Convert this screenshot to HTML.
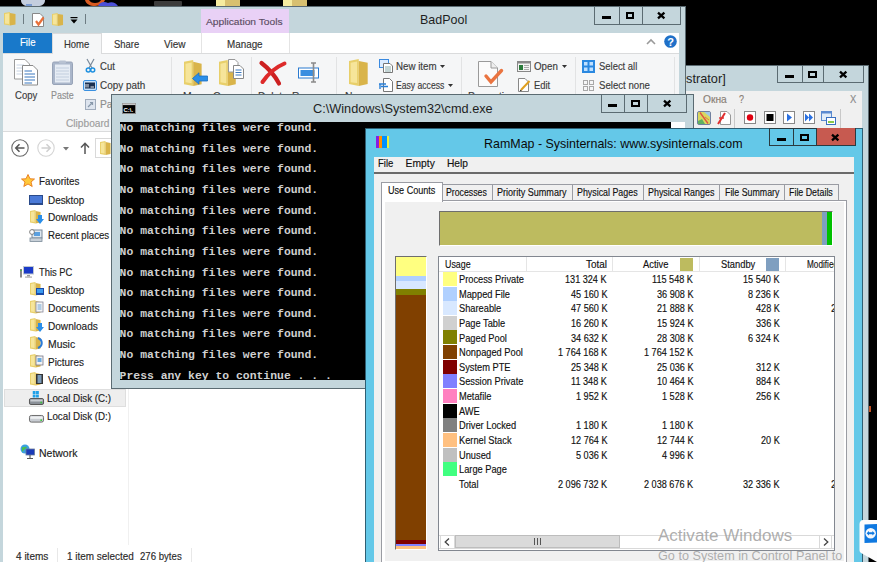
<!DOCTYPE html>
<html><head><meta charset="utf-8">
<style>

*{margin:0;padding:0;box-sizing:border-box}
html,body{width:877px;height:562px;overflow:hidden;background:#000;position:relative}
.a{position:absolute}
.t{position:absolute;white-space:pre;line-height:1}
svg{position:absolute;overflow:visible}

</style></head><body>
<svg style="left:0;top:0" width="330" height="6"><path d="M21 0 H45 C45 4 42 6 38 6 H28 C24 6 21 4 21 0Z" fill="#c4cede"/><path d="M26 6 H32 V4 H26Z" fill="#7a9ad0"/><path d="M85 0 C86 4 90 6 95 6 C100 6 104 3 105 0 H101 C100 2 98 3 95 3 C92 3 90 2 89 0Z" fill="#d85a20"/><path d="M98 6 C100 2 104 1 108 3 C112 1 116 3 118 6Z" fill="#4a50d8"/><rect x="154" y="1" width="28" height="5" rx="1" fill="#3c3c3c"/><rect x="216" y="0" width="9" height="6" fill="#f6eca0"/><rect x="225" y="0" width="15" height="6" fill="#d8c070"/><rect x="283" y="0" width="9" height="6" fill="#f6eca0"/><rect x="292" y="0" width="15" height="6" fill="#d8c070"/></svg>
<div class="a" style="left:0px;top:6px;width:686px;height:556px;background:#c4d6dc;border-top:1px solid #5b6b72;border-right:1px solid #5b6b72"></div>
<div class="a" style="left:594px;top:6px;width:87px;height:19px;background:#c4d6dc;border:1px solid #5b6b72"></div>
<div class="a" style="left:618.5px;top:6px;width:1px;height:19px;background:#5b6b72;"></div>
<div class="a" style="left:641.5px;top:6px;width:1px;height:19px;background:#5b6b72;"></div>
<div class="a" style="left:601.75px;top:16px;width:9px;height:2.8px;background:#000;"></div>
<div class="a" style="left:625.7px;top:12.2px;width:8.8px;height:6.6px;border:2px solid #000;border-top-width:2.3px"></div>
<svg style="left:657.05px;top:12px" width="8.4" height="7" viewBox="0 0 8.4 7"><path d="M1 0.6 L7.4 6.4 M7.4 0.6 L1 6.4" stroke="#000" stroke-width="2.3" stroke-linecap="butt"/></svg>
<svg style="left:4px;top:12px" width="12" height="13.5" viewBox="0 0 12 14" preserveAspectRatio="none"><path d="M0 1 L6 0 L6 14 L0 13Z" fill="#e8cf6a"/><path d="M6 1 L11.5 2 L11.5 13 L6 14Z" fill="#d9b44a"/><path d="M1 2 L5 1.3 L5 12.5 L1 12Z" fill="#f6e59a"/></svg>
<div class="a" style="left:23px;top:14px;width:1px;height:10px;background:#6d7c82;"></div>
<svg style="left:32px;top:13px" width="13" height="14" viewBox="0 0 13 14"><path d="M0.5 0.5 H8 L11.5 4 V13.5 H0.5Z" fill="#fff" stroke="#888"/><path d="M4 8 L6.5 11.5 L11.5 4.5" stroke="#e8703a" stroke-width="2.2" fill="none"/></svg>
<svg style="left:51.5px;top:13px" width="11.5" height="13" viewBox="0 0 12 14" preserveAspectRatio="none"><path d="M0 1 L6 0 L6 14 L0 13Z" fill="#e8cf6a"/><path d="M6 1 L11.5 2 L11.5 13 L6 14Z" fill="#d9b44a"/><path d="M1 2 L5 1.3 L5 12.5 L1 12Z" fill="#f6e59a"/></svg>
<svg style="left:70px;top:17px" width="8" height="7"><rect x="0.5" y="0" width="7" height="1.2" fill="#000"/><path d="M0.5 2.5 H7.5 L4 6.5Z" fill="#000"/></svg>
<div class="a" style="left:85px;top:14px;width:1px;height:10px;background:#6d7c82;"></div>
<div class="a" style="left:200.5px;top:9.4px;width:88.6px;height:23.6px;background:#e9d1f6;"></div>
<span class="t" style="-webkit-text-stroke:0.15px #5b4d63;left:206.40px;top:17.00px;font-size:9.9px;color:#5b4d63;font-family:'Liberation Sans',sans-serif;font-weight:400;transform:scaleX(1.0360);transform-origin:0 0;">Application Tools</span>
<span class="t" style="left:419.90px;top:13.00px;font-size:13.6px;color:#1e1e1e;font-family:'Liberation Sans',sans-serif;font-weight:400;transform:scaleX(0.9182);transform-origin:0 0;">BadPool</span>
<div class="a" style="left:3px;top:33px;width:676px;height:20px;background:#ffffff;"></div>
<div class="a" style="left:3px;top:33px;width:48.5px;height:19.6px;background:#1979ca;"></div>
<span class="t" style="-webkit-text-stroke:0.15px #ffffff;left:19.70px;top:38.00px;font-size:10.2px;color:#ffffff;font-family:'Liberation Sans',sans-serif;font-weight:400;transform:scaleX(0.9439);transform-origin:0 0;">File</span>
<span class="t" style="-webkit-text-stroke:0.15px #333;left:113.50px;top:40.00px;font-size:10.3px;color:#333;font-family:'Liberation Sans',sans-serif;font-weight:400;transform:scaleX(0.9169);transform-origin:0 0;">Share</span>
<span class="t" style="-webkit-text-stroke:0.15px #333;left:164.00px;top:40.00px;font-size:10.3px;color:#333;font-family:'Liberation Sans',sans-serif;font-weight:400;transform:scaleX(0.9756);transform-origin:0 0;">View</span>
<div class="a" style="left:201px;top:33px;width:1px;height:20px;background:#e4e4e4;"></div>
<div class="a" style="left:288.5px;top:33px;width:1px;height:20px;background:#e4e4e4;"></div>
<span class="t" style="-webkit-text-stroke:0.15px #333;left:226.70px;top:40.00px;font-size:10.3px;color:#333;font-family:'Liberation Sans',sans-serif;font-weight:400;transform:scaleX(0.9565);transform-origin:0 0;">Manage</span>
<svg style="left:646px;top:38px" width="10" height="7"><path d="M1 6 L5 2 L9 6" stroke="#9a9a9a" stroke-width="1.6" fill="none"/></svg>
<svg style="left:663.5px;top:35.3px" width="13" height="13"><circle cx="6.5" cy="6.5" r="6.3" fill="#1f70c8"/><text x="6.5" y="10.6" font-family="Liberation Sans" font-weight="bold" font-size="11" fill="#fff" text-anchor="middle">?</text></svg>
<div class="a" style="left:3px;top:53px;width:676px;height:79px;background:#f5f6f7;border-top:1px solid #dadbdc;border-bottom:1px solid #dadbdc"></div>
<div class="a" style="left:52px;top:33px;width:49.5px;height:21px;background:#f5f6f7;border:1px solid #dadbdc;border-bottom:none"></div>
<span class="t" style="-webkit-text-stroke:0.15px #333;left:63.70px;top:40.00px;font-size:10.3px;color:#333;font-family:'Liberation Sans',sans-serif;font-weight:400;transform:scaleX(0.9210);transform-origin:0 0;">Home</span>
<div class="a" style="left:171px;top:57px;width:1px;height:72px;background:#e2e3e4;"></div>
<div class="a" style="left:251.4px;top:57px;width:1px;height:72px;background:#e2e3e4;"></div>
<div class="a" style="left:336.3px;top:57px;width:1px;height:72px;background:#e2e3e4;"></div>
<div class="a" style="left:461px;top:57px;width:1px;height:72px;background:#e2e3e4;"></div>
<div class="a" style="left:575.4px;top:57px;width:1px;height:72px;background:#e2e3e4;"></div>
<div class="a" style="left:674.4px;top:57px;width:1px;height:72px;background:#e2e3e4;"></div>
<svg style="left:14px;top:59px" width="25" height="27" viewBox="0 0 25 27"><path d="M0.5 0.5 H11 L15.5 5 V20 H0.5Z" fill="#fff" stroke="#9a9a9a"/><path d="M2.5 6 H10 M2.5 9 H12 M2.5 12 H12 M2.5 15 H12" stroke="#c8d4e4"/><path d="M8.5 6.5 H19 L23.5 11 V26 H8.5Z" fill="#fff" stroke="#8a8a8a"/><path d="M10.5 12 H18 M10.5 15 H21 M10.5 18 H21 M10.5 21 H21 M10.5 24 H18" stroke="#3a78c0" stroke-width="1.2"/></svg>
<span class="t" style="-webkit-text-stroke:0.15px #3b3b3b;left:14.70px;top:91.00px;font-size:10.4px;color:#3b3b3b;font-family:'Liberation Sans',sans-serif;font-weight:400;transform:scaleX(0.9190);transform-origin:0 0;">Copy</span>
<svg style="left:52px;top:60px" width="21" height="25" viewBox="0 0 21 25"><rect x="0.5" y="2" width="20" height="22.5" rx="1.5" fill="#aab6ca" stroke="#98a4b8"/><rect x="3" y="4.5" width="15" height="18" fill="#e6ecf4"/><path d="M4 8 H17 M4 11 H17 M4 14 H17 M4 17 H17 M4 20 H17" stroke="#c2cede"/><rect x="7" y="0.5" width="7" height="3" rx="1" fill="#b8c2d2"/></svg>
<span class="t" style="-webkit-text-stroke:0.15px #8e8e8e;left:50.80px;top:91.00px;font-size:10.4px;color:#8e8e8e;font-family:'Liberation Sans',sans-serif;font-weight:400;transform:scaleX(0.8578);transform-origin:0 0;">Paste</span>
<svg style="left:85.5px;top:59px" width="9" height="14" viewBox="0 0 9 14"><path d="M1 0 L6 9 M8 0 L3 9" stroke="#7a8a9a" stroke-width="1.2"/><circle cx="2.3" cy="11" r="2" fill="none" stroke="#1e90e0" stroke-width="1.5"/><circle cx="6.7" cy="11" r="2" fill="none" stroke="#1e90e0" stroke-width="1.5"/></svg>
<span class="t" style="-webkit-text-stroke:0.15px #3b3b3b;left:100.00px;top:62.00px;font-size:10.3px;color:#3b3b3b;font-family:'Liberation Sans',sans-serif;font-weight:400;transform:scaleX(0.9294);transform-origin:0 0;">Cut</span>
<svg style="left:83px;top:80px" width="14" height="11" viewBox="0 0 14 11"><rect x="0.5" y="0.5" width="13" height="10" rx="1.5" fill="#c4e0fa" stroke="#3a90e0"/><rect x="2" y="2.5" width="10" height="6" fill="#1a3050"/><path d="M3 4 V7.5 M5 4 V7.5 M7.5 7 H11" stroke="#fff" stroke-width="0.9"/></svg>
<span class="t" style="-webkit-text-stroke:0.15px #3b3b3b;left:100.00px;top:81.00px;font-size:10.3px;color:#3b3b3b;font-family:'Liberation Sans',sans-serif;font-weight:400;transform:scaleX(0.9627);transform-origin:0 0;">Copy path</span>
<svg style="left:85px;top:98px" width="11" height="12" viewBox="0 0 11 12"><rect x="0.5" y="1.5" width="10" height="10" fill="#dde4ee" stroke="#a0acbc"/><path d="M3 9 L7 5 M5 4.5 H7.5 V7" stroke="#8898aa" stroke-width="1.2" fill="none"/></svg>
<span class="t" style="-webkit-text-stroke:0.15px #8e8e8e;left:100.00px;top:100.00px;font-size:10.3px;color:#8e8e8e;font-family:'Liberation Sans',sans-serif;font-weight:400;">Paste shortcut</span>
<span class="t" style="-webkit-text-stroke:0.15px #9c9c9c;left:65.70px;top:119.00px;font-size:10.3px;color:#9c9c9c;font-family:'Liberation Sans',sans-serif;font-weight:400;transform:scaleX(0.9869);transform-origin:0 0;">Clipboard</span>
<svg style="left:183.6px;top:59.8px" width="18.4" height="26" viewBox="0 0 12 14" preserveAspectRatio="none"><path d="M0 1 L6 0 L6 14 L0 13Z" fill="#e8cf6a"/><path d="M6 1 L11.5 2 L11.5 13 L6 14Z" fill="#d9b44a"/><path d="M1 2 L5 1.3 L5 12.5 L1 12Z" fill="#f6e59a"/></svg>
<svg style="left:192px;top:72px" width="16" height="13" viewBox="0 0 16 13"><path d="M0.5 6.5 L7 0.8 V4 H15.5 V9 H7 V12.2Z" fill="#2a8ee8" stroke="#1a6ec0" stroke-width="0.8"/></svg>
<svg style="left:218.5px;top:59.8px" width="17.5" height="26" viewBox="0 0 12 14" preserveAspectRatio="none"><path d="M0 1 L6 0 L6 14 L0 13Z" fill="#e8cf6a"/><path d="M6 1 L11.5 2 L11.5 13 L6 14Z" fill="#d9b44a"/><path d="M1 2 L5 1.3 L5 12.5 L1 12Z" fill="#f6e59a"/></svg>
<svg style="left:228px;top:59px" width="16" height="20" viewBox="0 0 16 20"><path d="M0.5 0.5 H7 L10 3.5 V13 H0.5Z" fill="#fff" stroke="#999"/><path d="M5.5 6.5 H12 L15.5 10 V19.5 H5.5Z" fill="#fff" stroke="#888"/><path d="M7.5 11 H13.5 M7.5 13.5 H13.5 M7.5 16 H13.5" stroke="#3a78c0"/></svg>
<svg style="left:259px;top:61px" width="27" height="24" viewBox="0 0 27 24"><path d="M2.5 2 C9 7 15 13 20 22.5" stroke="#cc2020" stroke-width="4.2" fill="none" stroke-linecap="round"/><path d="M25.5 2.5 C17 6 9 13 3.5 21" stroke="#dd2a2a" stroke-width="4" fill="none" stroke-linecap="round"/></svg>
<svg style="left:298px;top:62px" width="25" height="21" viewBox="0 0 25 21"><rect x="0.5" y="6" width="20" height="10" fill="#fff" stroke="#2a7ad0"/><rect x="2.5" y="8" width="14" height="6" fill="#3a8ee0"/><path d="M13 1 H18 M15.5 1 V20 M13 20 H18" stroke="#8a8a8a" stroke-width="1.6"/></svg>
<svg style="left:348.5px;top:59.2px" width="19.5" height="27" viewBox="0 0 12 14" preserveAspectRatio="none"><path d="M0 1 L6 0 L6 14 L0 13Z" fill="#e8cf6a"/><path d="M6 1 L11.5 2 L11.5 13 L6 14Z" fill="#d9b44a"/><path d="M1 2 L5 1.3 L5 12.5 L1 12Z" fill="#f6e59a"/></svg>
<svg style="left:379px;top:59px" width="14" height="14" viewBox="0 0 14 14"><rect x="0.5" y="0.5" width="9" height="8" fill="#dcecff" stroke="#3a8ae0"/><path d="M4.5 4.5 H11 L13.5 7 V13.5 H4.5Z" fill="#fff" stroke="#777"/><path d="M6 8 H12 M6 10 H12 M6 12 H12" stroke="#8aa"/></svg>
<span class="t" style="-webkit-text-stroke:0.15px #3b3b3b;left:395.70px;top:62.00px;font-size:10.3px;color:#3b3b3b;font-family:'Liberation Sans',sans-serif;font-weight:400;transform:scaleX(0.9459);transform-origin:0 0;">New item</span>
<svg style="left:440px;top:64.5px" width="5" height="3"><path d="M0 0 H5 L2.5 3Z" fill="#333"/></svg>
<svg style="left:379px;top:77.5px" width="14" height="14" viewBox="0 0 14 14"><path d="M4.5 0.5 H10.5 L13.5 3.5 V13.5 H4.5Z" fill="#fff" stroke="#777"/><path d="M0 6 H7 M2 8.5 H9 M1 6 V11" stroke="#2a80d8" stroke-width="1.4"/></svg>
<span class="t" style="-webkit-text-stroke:0.15px #3b3b3b;left:395.70px;top:81.00px;font-size:10.3px;color:#3b3b3b;font-family:'Liberation Sans',sans-serif;font-weight:400;transform:scaleX(0.8355);transform-origin:0 0;">Easy access</span>
<svg style="left:447.5px;top:83.5px" width="5" height="3"><path d="M0 0 H5 L2.5 3Z" fill="#333"/></svg>
<svg style="left:478px;top:61px" width="25" height="26" viewBox="0 0 25 26"><path d="M0.5 0.5 H13 L19.5 7 V25.5 H0.5Z" fill="#fbfbfb" stroke="#9a9a9a"/><path d="M13 0.5 V7 H19.5" fill="#eee" stroke="#9a9a9a"/><path d="M8 15 L13 21 L23.5 9.5" stroke="#ea7440" stroke-width="3.4" fill="none" stroke-linecap="round"/></svg>
<svg style="left:517px;top:60.5px" width="14" height="11" viewBox="0 0 14 11"><rect x="0.5" y="0.5" width="13" height="10" fill="#f4f4f4" stroke="#888"/><rect x="0.5" y="0.5" width="13" height="2" fill="#8a8a8a"/><rect x="2" y="4" width="4" height="5" fill="#2a7a3a"/><path d="M7 4.5 H12 M7 6.5 H12 M7 8.5 H12" stroke="#aaa"/></svg>
<span class="t" style="-webkit-text-stroke:0.15px #3b3b3b;left:533.60px;top:62.00px;font-size:10.3px;color:#3b3b3b;font-family:'Liberation Sans',sans-serif;font-weight:400;transform:scaleX(0.9443);transform-origin:0 0;">Open</span>
<svg style="left:561.5px;top:64.5px" width="5" height="3"><path d="M0 0 H5 L2.5 3Z" fill="#333"/></svg>
<svg style="left:517.5px;top:78px" width="13" height="14" viewBox="0 0 13 14"><path d="M0.5 0.5 H7 L10.5 4 V13.5 H0.5Z" fill="#fff" stroke="#888"/><path d="M3 12 L11.5 3" stroke="#e0a020" stroke-width="2"/><path d="M3 12 L2.5 13" stroke="#333" stroke-width="1.5"/></svg>
<span class="t" style="-webkit-text-stroke:0.15px #3b3b3b;left:533.60px;top:81.00px;font-size:10.3px;color:#3b3b3b;font-family:'Liberation Sans',sans-serif;font-weight:400;transform:scaleX(0.9127);transform-origin:0 0;">Edit</span>
<svg style="left:582px;top:59.7px" width="13" height="13" viewBox="0 0 13 13"><rect x="0" y="0" width="13" height="13" fill="#2a88e0"/><rect x="2" y="2" width="3.5" height="3.5" fill="#bfe0ff"/><rect x="7.5" y="2" width="3.5" height="3.5" fill="#bfe0ff"/><rect x="2" y="7.5" width="3.5" height="3.5" fill="#bfe0ff"/><rect x="7.5" y="7.5" width="3.5" height="3.5" fill="#bfe0ff"/></svg>
<span class="t" style="-webkit-text-stroke:0.15px #3b3b3b;left:598.60px;top:62.00px;font-size:10.3px;color:#3b3b3b;font-family:'Liberation Sans',sans-serif;font-weight:400;transform:scaleX(0.9167);transform-origin:0 0;">Select all</span>
<svg style="left:582px;top:78.5px" width="13" height="13" viewBox="0 0 13 13"><g fill="none" stroke="#a8a8a8"><rect x="1.5" y="1.5" width="4" height="4"/><rect x="7.5" y="1.5" width="4" height="4"/><rect x="1.5" y="7.5" width="4" height="4"/><rect x="7.5" y="7.5" width="4" height="4"/></g></svg>
<span class="t" style="-webkit-text-stroke:0.15px #3b3b3b;left:598.60px;top:81.00px;font-size:10.3px;color:#3b3b3b;font-family:'Liberation Sans',sans-serif;font-weight:400;transform:scaleX(0.9358);transform-origin:0 0;">Select none</span>
<span class="t" style="-webkit-text-stroke:0.15px #3b3b3b;left:183.00px;top:92.00px;font-size:10.3px;color:#3b3b3b;font-family:'Liberation Sans',sans-serif;font-weight:400;">Move</span>
<span class="t" style="-webkit-text-stroke:0.15px #3b3b3b;left:213.00px;top:92.00px;font-size:10.3px;color:#3b3b3b;font-family:'Liberation Sans',sans-serif;font-weight:400;">Copy</span>
<span class="t" style="-webkit-text-stroke:0.15px #3b3b3b;left:258.00px;top:92.00px;font-size:10.3px;color:#3b3b3b;font-family:'Liberation Sans',sans-serif;font-weight:400;">Delete</span>
<span class="t" style="-webkit-text-stroke:0.15px #3b3b3b;left:292.00px;top:92.00px;font-size:10.3px;color:#3b3b3b;font-family:'Liberation Sans',sans-serif;font-weight:400;">Rename</span>
<span class="t" style="-webkit-text-stroke:0.15px #3b3b3b;left:345.00px;top:92.00px;font-size:10.3px;color:#3b3b3b;font-family:'Liberation Sans',sans-serif;font-weight:400;">New</span>
<span class="t" style="-webkit-text-stroke:0.15px #3b3b3b;left:468.00px;top:92.00px;font-size:10.3px;color:#3b3b3b;font-family:'Liberation Sans',sans-serif;font-weight:400;">Properties</span>
<div class="a" style="left:3px;top:132px;width:676px;height:430px;background:#ffffff;"></div>
<svg style="left:11px;top:139px" width="18" height="18" viewBox="0 0 18 18"><circle cx="9" cy="9" r="8.2" fill="none" stroke="#6a6a6a" stroke-width="1.1"/><path d="M13.5 9 H5 M8.5 5.3 L4.8 9 L8.5 12.7" stroke="#555" stroke-width="1.6" fill="none"/></svg>
<svg style="left:37px;top:139px" width="18" height="18" viewBox="0 0 18 18"><circle cx="9" cy="9" r="8.2" fill="none" stroke="#d4d4d4" stroke-width="1.1"/><path d="M4.5 9 H13 M9.5 5.3 L13.2 9 L9.5 12.7" stroke="#d0d0d0" stroke-width="1.6" fill="none"/></svg>
<svg style="left:63px;top:146.5px" width="6" height="4"><path d="M0 0 H6 L3 3.5Z" fill="#777"/></svg>
<svg style="left:80px;top:142px" width="10" height="12" viewBox="0 0 10 12"><path d="M5 12 V1.5 M1 5.5 L5 1.3 L9 5.5" stroke="#555" stroke-width="1.5" fill="none"/></svg>
<div class="a" style="left:95.4px;top:138.3px;width:30px;height:20px;background:#fff;border:1px solid #d9d9d9"></div>
<svg style="left:100px;top:141px" width="11" height="14" viewBox="0 0 12 14" preserveAspectRatio="none"><path d="M0 1 L6 0 L6 14 L0 13Z" fill="#e8cf6a"/><path d="M6 1 L11.5 2 L11.5 13 L6 14Z" fill="#d9b44a"/><path d="M1 2 L5 1.3 L5 12.5 L1 12Z" fill="#f6e59a"/></svg>
<div class="a" style="left:4.2px;top:389.4px;width:121.8px;height:17.3px;background:#eeeeee;border:1px solid #dedede"></div>
<svg style="left:20.5px;top:174px" width="14" height="13" viewBox="0 0 14 13"><path d="M7 0.5 L9 4.8 L13.5 5 L10 8 L11.2 12.5 L7 10 L2.8 12.5 L4 8 L0.5 5 L5 4.8Z" fill="#ffc83a" stroke="#e8781a" stroke-width="0.9"/></svg>
<span class="t" style="-webkit-text-stroke:0.15px #1b1b1b;left:38.70px;top:176.00px;font-size:10.6px;color:#1b1b1b;font-family:'Liberation Sans',sans-serif;font-weight:400;transform:scaleX(0.9248);transform-origin:0 0;">Favorites</span>
<svg style="left:29px;top:195px" width="14" height="10" viewBox="0 0 14 10"><rect x="0" y="0" width="14" height="10" fill="#2a4a8a"/><rect x="1" y="1" width="12" height="7" fill="#4a7ad8"/></svg>
<span class="t" style="-webkit-text-stroke:0.15px #1b1b1b;left:47.70px;top:195.00px;font-size:10.6px;color:#1b1b1b;font-family:'Liberation Sans',sans-serif;font-weight:400;transform:scaleX(0.9338);transform-origin:0 0;">Desktop</span>
<svg style="left:30px;top:210px" width="11" height="13.5" viewBox="0 0 12 14" preserveAspectRatio="none"><path d="M0 1 L6 0 L6 14 L0 13Z" fill="#e8cf6a"/><path d="M6 1 L11.5 2 L11.5 13 L6 14Z" fill="#d9b44a"/><path d="M1 2 L5 1.3 L5 12.5 L1 12Z" fill="#f6e59a"/></svg>
<svg style="left:36px;top:215px" width="8" height="9"><path d="M2 0 H6 V4 H8 L4 9 L0 4 H2Z" fill="#2a8ee8"/></svg>
<span class="t" style="-webkit-text-stroke:0.15px #1b1b1b;left:47.70px;top:212.00px;font-size:10.6px;color:#1b1b1b;font-family:'Liberation Sans',sans-serif;font-weight:400;transform:scaleX(0.9500);transform-origin:0 0;">Downloads</span>
<svg style="left:29px;top:229px" width="14" height="13" viewBox="0 0 14 13"><rect x="3" y="1" width="10" height="8" fill="#dfe8f0" stroke="#7a8a9a"/><rect x="5" y="3" width="6" height="4" fill="#5aa0e0"/><rect x="1" y="9" width="12" height="3.5" fill="#c8d0d8" stroke="#7a8a9a" stroke-width="0.8"/><circle cx="3" cy="3" r="2.4" fill="#fff" stroke="#666" stroke-width="0.8"/></svg>
<span class="t" style="-webkit-text-stroke:0.15px #1b1b1b;left:47.70px;top:230.00px;font-size:10.6px;color:#1b1b1b;font-family:'Liberation Sans',sans-serif;font-weight:400;transform:scaleX(0.9115);transform-origin:0 0;">Recent places</span>
<svg style="left:20px;top:265.5px" width="14" height="12" viewBox="0 0 14 12"><rect x="3" y="0" width="11" height="8.5" fill="#c0c8d0"/><rect x="4" y="1" width="9" height="6.5" fill="#1a3ac8"/><rect x="7" y="9" width="3" height="1.5" fill="#999"/><rect x="5" y="10.5" width="7" height="1.2" fill="#aaa"/><rect x="0" y="3" width="2" height="8.5" fill="#888"/><rect x="0.5" y="4" width="1" height="1" fill="#2c2"/></svg>
<span class="t" style="-webkit-text-stroke:0.15px #1b1b1b;left:39.20px;top:267.00px;font-size:10.6px;color:#1b1b1b;font-family:'Liberation Sans',sans-serif;font-weight:400;transform:scaleX(0.8862);transform-origin:0 0;">This PC</span>
<svg style="left:30px;top:281.9px" width="11" height="13.5" viewBox="0 0 12 14" preserveAspectRatio="none"><path d="M0 1 L6 0 L6 14 L0 13Z" fill="#e8cf6a"/><path d="M6 1 L11.5 2 L11.5 13 L6 14Z" fill="#d9b44a"/><path d="M1 2 L5 1.3 L5 12.5 L1 12Z" fill="#f6e59a"/></svg>
<span class="t" style="-webkit-text-stroke:0.15px #1b1b1b;left:47.70px;top:285.00px;font-size:10.6px;color:#1b1b1b;font-family:'Liberation Sans',sans-serif;font-weight:400;transform:scaleX(0.9338);transform-origin:0 0;">Desktop</span>
<svg style="left:30px;top:299.9px" width="11" height="13.5" viewBox="0 0 12 14" preserveAspectRatio="none"><path d="M0 1 L6 0 L6 14 L0 13Z" fill="#e8cf6a"/><path d="M6 1 L11.5 2 L11.5 13 L6 14Z" fill="#d9b44a"/><path d="M1 2 L5 1.3 L5 12.5 L1 12Z" fill="#f6e59a"/></svg>
<span class="t" style="-webkit-text-stroke:0.15px #1b1b1b;left:47.70px;top:303.00px;font-size:10.6px;color:#1b1b1b;font-family:'Liberation Sans',sans-serif;font-weight:400;transform:scaleX(0.9647);transform-origin:0 0;">Documents</span>
<svg style="left:30px;top:317.8px" width="11" height="13.5" viewBox="0 0 12 14" preserveAspectRatio="none"><path d="M0 1 L6 0 L6 14 L0 13Z" fill="#e8cf6a"/><path d="M6 1 L11.5 2 L11.5 13 L6 14Z" fill="#d9b44a"/><path d="M1 2 L5 1.3 L5 12.5 L1 12Z" fill="#f6e59a"/></svg>
<span class="t" style="-webkit-text-stroke:0.15px #1b1b1b;left:47.70px;top:321.00px;font-size:10.6px;color:#1b1b1b;font-family:'Liberation Sans',sans-serif;font-weight:400;transform:scaleX(0.9500);transform-origin:0 0;">Downloads</span>
<svg style="left:30px;top:336.0px" width="11" height="13.5" viewBox="0 0 12 14" preserveAspectRatio="none"><path d="M0 1 L6 0 L6 14 L0 13Z" fill="#e8cf6a"/><path d="M6 1 L11.5 2 L11.5 13 L6 14Z" fill="#d9b44a"/><path d="M1 2 L5 1.3 L5 12.5 L1 12Z" fill="#f6e59a"/></svg>
<span class="t" style="-webkit-text-stroke:0.15px #1b1b1b;left:47.70px;top:339.00px;font-size:10.6px;color:#1b1b1b;font-family:'Liberation Sans',sans-serif;font-weight:400;transform:scaleX(0.9793);transform-origin:0 0;">Music</span>
<svg style="left:30px;top:354.1px" width="11" height="13.5" viewBox="0 0 12 14" preserveAspectRatio="none"><path d="M0 1 L6 0 L6 14 L0 13Z" fill="#e8cf6a"/><path d="M6 1 L11.5 2 L11.5 13 L6 14Z" fill="#d9b44a"/><path d="M1 2 L5 1.3 L5 12.5 L1 12Z" fill="#f6e59a"/></svg>
<span class="t" style="-webkit-text-stroke:0.15px #1b1b1b;left:47.70px;top:357.00px;font-size:10.6px;color:#1b1b1b;font-family:'Liberation Sans',sans-serif;font-weight:400;transform:scaleX(0.9378);transform-origin:0 0;">Pictures</span>
<svg style="left:30px;top:372.1px" width="11" height="13.5" viewBox="0 0 12 14" preserveAspectRatio="none"><path d="M0 1 L6 0 L6 14 L0 13Z" fill="#e8cf6a"/><path d="M6 1 L11.5 2 L11.5 13 L6 14Z" fill="#d9b44a"/><path d="M1 2 L5 1.3 L5 12.5 L1 12Z" fill="#f6e59a"/></svg>
<span class="t" style="-webkit-text-stroke:0.15px #1b1b1b;left:47.70px;top:375.00px;font-size:10.6px;color:#1b1b1b;font-family:'Liberation Sans',sans-serif;font-weight:400;transform:scaleX(0.9347);transform-origin:0 0;">Videos</span>
<svg style="left:36px;top:288px" width="8" height="7"><rect width="8" height="7" fill="#1a4aa8"/><rect x="1" y="1" width="6" height="4" fill="#3a9af0"/></svg>
<svg style="left:36px;top:302px" width="7" height="10"><rect width="7" height="10" fill="#f6f6f6" stroke="#889" stroke-width="0.8"/><path d="M1.5 3 H5.5 M1.5 5 H5.5 M1.5 7 H5.5" stroke="#6aa0d0"/></svg>
<svg style="left:36px;top:323px" width="8" height="9"><path d="M2 0 H6 V4 H8 L4 9 L0 4 H2Z" fill="#2a8ee8"/></svg>
<svg style="left:37px;top:338px" width="6" height="10"><path d="M1 0 C6 2 6 8 1 10" stroke="#2a7ad8" stroke-width="2" fill="none"/></svg>
<svg style="left:36px;top:356px" width="7" height="9"><rect width="7" height="9" fill="#f2f2f2" stroke="#778" stroke-width="0.8"/><rect x="1.5" y="2" width="4" height="4" fill="#6aaae0"/></svg>
<svg style="left:36px;top:374px" width="7" height="10"><rect width="7" height="10" fill="#333"/><rect x="1.5" y="1" width="4" height="8" fill="#7a9ab8"/></svg>
<svg style="left:28.5px;top:390.5px" width="15" height="14" viewBox="0 0 16 14" preserveAspectRatio="none"><rect x="0.5" y="7.5" width="15" height="6" rx="1.5" fill="#8a9098" stroke="#555"/><rect x="1.5" y="8.5" width="13" height="2" fill="#c8ccd2"/><circle cx="13" cy="11.5" r="0.9" fill="#3c3"/><rect x="4" y="0" width="3" height="3" fill="#1ea0e8"/><rect x="7.5" y="0" width="3" height="3" fill="#1ea0e8"/><rect x="4" y="3.5" width="3" height="3" fill="#1ea0e8"/><rect x="7.5" y="3.5" width="3" height="3" fill="#1ea0e8"/></svg>
<span class="t" style="-webkit-text-stroke:0.15px #1b1b1b;left:47.40px;top:393.00px;font-size:10.6px;color:#1b1b1b;font-family:'Liberation Sans',sans-serif;font-weight:400;transform:scaleX(0.9227);transform-origin:0 0;">Local Disk (C:)</span>
<svg style="left:28.5px;top:414.8px" width="15" height="7.6" viewBox="0 0 16 8" preserveAspectRatio="none"><rect x="0.5" y="0.5" width="15" height="7" rx="2" fill="#c8ccd2" stroke="#666"/><rect x="1.5" y="1.5" width="13" height="2.5" fill="#eef0f2"/><circle cx="13" cy="5.5" r="0.9" fill="#3c3"/></svg>
<span class="t" style="-webkit-text-stroke:0.15px #1b1b1b;left:47.40px;top:411.00px;font-size:10.6px;color:#1b1b1b;font-family:'Liberation Sans',sans-serif;font-weight:400;transform:scaleX(0.9227);transform-origin:0 0;">Local Disk (D:)</span>
<svg style="left:20px;top:444px" width="15" height="15" viewBox="0 0 15 15"><circle cx="5" cy="5" r="4.5" fill="#3aa0e0"/><path d="M2 3 C4 4 5 2 7 3 C6 5 3 6 2 8Z" fill="#4cc04c"/><rect x="6" y="5" width="8.5" height="6" fill="#1a3ab8" stroke="#6a7a9a" stroke-width="0.8"/><path d="M10 11 V14 M7 14.5 H13" stroke="#555" stroke-width="1.1"/></svg>
<span class="t" style="-webkit-text-stroke:0.15px #1b1b1b;left:38.60px;top:448.00px;font-size:10.6px;color:#1b1b1b;font-family:'Liberation Sans',sans-serif;font-weight:400;transform:scaleX(0.9882);transform-origin:0 0;">Network</span>
<div class="a" style="left:127.5px;top:165px;width:1px;height:380px;background:#f0f0f0;"></div>
<span class="t" style="-webkit-text-stroke:0.15px #2a2a2a;left:15.50px;top:552.00px;font-size:10.3px;color:#2a2a2a;font-family:'Liberation Sans',sans-serif;font-weight:400;transform:scaleX(0.9758);transform-origin:0 0;">4 items</span>
<div class="a" style="left:57px;top:548px;width:1px;height:14px;background:#e8e8e8;"></div>
<span class="t" style="-webkit-text-stroke:0.15px #2a2a2a;left:66.60px;top:552.00px;font-size:10.3px;color:#2a2a2a;font-family:'Liberation Sans',sans-serif;font-weight:400;transform:scaleX(0.9644);transform-origin:0 0;">1 item selected</span>
<span class="t" style="-webkit-text-stroke:0.15px #2a2a2a;left:139.60px;top:552.00px;font-size:10.3px;color:#2a2a2a;font-family:'Liberation Sans',sans-serif;font-weight:400;transform:scaleX(0.9338);transform-origin:0 0;">276 bytes</span>
<div class="a" style="left:190.5px;top:548px;width:1px;height:14px;background:#e8e8e8;"></div>
<div class="a" style="left:686px;top:65px;width:182.8px;height:497px;background:#c4d6dc;border:1px solid #5b6b72;border-left:none;border-bottom:none"></div>
<span class="t" style="left:686.00px;top:72.00px;font-size:13.6px;color:#1e1e1e;font-family:'Liberation Sans',sans-serif;font-weight:400;transform:scaleX(0.9406);transform-origin:0 0;">strator]</span>
<div class="a" style="left:777.3px;top:65px;width:86.70000000000005px;height:18px;background:#c4d6dc;border:1px solid #5b6b72"></div>
<div class="a" style="left:801.5px;top:65px;width:1px;height:18px;background:#5b6b72;"></div>
<div class="a" style="left:823px;top:65px;width:1px;height:18px;background:#5b6b72;"></div>
<div class="a" style="left:784.9px;top:75px;width:9px;height:2.8px;background:#000;"></div>
<div class="a" style="left:807.95px;top:71.2px;width:8.8px;height:6.6px;border:2px solid #000;border-top-width:2.3px"></div>
<svg style="left:839.3px;top:71px" width="8.4" height="7" viewBox="0 0 8.4 7"><path d="M1 0.6 L7.4 6.4 M7.4 0.6 L1 6.4" stroke="#000" stroke-width="2.3" stroke-linecap="butt"/></svg>
<div class="a" style="left:686px;top:90.5px;width:176px;height:472px;background:#f0f0f0;"></div>
<span class="t" style="-webkit-text-stroke:0.15px #8a7f76;left:702.70px;top:95.00px;font-size:10.3px;color:#8a7f76;font-family:'Liberation Sans',sans-serif;font-weight:400;transform:scaleX(0.9943);transform-origin:0 0;">Окна</span>
<span class="t" style="-webkit-text-stroke:0.15px #8a7f76;left:739.00px;top:95.00px;font-size:10.3px;color:#8a7f76;font-family:'Liberation Sans',sans-serif;font-weight:400;transform:scaleX(0.8719);transform-origin:0 0;">?</span>
<span class="t" style="-webkit-text-stroke:0.15px #8a8a8a;left:850.00px;top:95.00px;font-size:10.3px;color:#8a8a8a;font-family:'Liberation Sans',sans-serif;font-weight:400;transform:scaleX(0.9164);transform-origin:0 0;">X</span>
<div class="a" style="left:734px;top:109px;width:1px;height:19px;background:#c8c8c8;"></div>
<div class="a" style="left:839.5px;top:109px;width:1px;height:19px;background:#c8c8c8;"></div>
<svg style="left:697px;top:111px" width="14" height="14" viewBox="0 0 14 14"><rect x="0.5" y="0.5" width="13" height="13" rx="1.5" fill="#d8d860" stroke="#7080a0"/><path d="M7 1 H13 V6 Z" fill="#a0c8e8"/><path d="M1 10 L5 8 L8 13 H1Z" fill="#60b060"/><path d="M3 1.5 L11 12.5" stroke="#e05040" stroke-width="1.3"/><path d="M8 6 L12 9" stroke="#e08040" stroke-width="1"/></svg>
<svg style="left:716.5px;top:111px" width="14" height="14" viewBox="0 0 14 14"><path d="M3.5 0.5 H10 L13.5 4 V13.5 H3.5Z" fill="#fff" stroke="#999"/><path d="M1 13 L8 2" stroke="#e03030" stroke-width="2"/><path d="M2 7 H7" stroke="#e03030" stroke-width="1.4"/></svg>
<svg style="left:743.8px;top:111.3px" width="12" height="13" viewBox="0 0 12 13"><rect x="0.5" y="0.5" width="11" height="12" fill="#fff" stroke="#888"/><circle cx="6" cy="6.5" r="3.2" fill="#e00010"/></svg>
<svg style="left:763.5px;top:111.3px" width="12" height="13" viewBox="0 0 12 13"><rect x="0.5" y="0.5" width="11" height="12" fill="#fff" stroke="#888"/><rect x="2.5" y="3" width="7" height="7" fill="#000"/></svg>
<svg style="left:783.4px;top:111.3px" width="12" height="13" viewBox="0 0 12 13"><rect x="0.5" y="0.5" width="11" height="12" fill="#fff" stroke="#888"/><path d="M4 2.5 L9 6.5 L4 10.5Z" fill="#2a70e0"/></svg>
<svg style="left:802.9px;top:111.3px" width="12" height="13" viewBox="0 0 12 13"><rect x="0.5" y="0.5" width="11" height="12" fill="#fff" stroke="#888"/><path d="M2 2.5 L6 6.5 L2 10.5Z M6 2.5 L10 6.5 L6 10.5Z" fill="#2a70e0"/></svg>
<svg style="left:821.4px;top:111px" width="15" height="14" viewBox="0 0 15 14"><rect x="0.5" y="0.5" width="10" height="9" fill="#e0ecf8" stroke="#5a8ad0"/><rect x="0.5" y="0.5" width="10" height="2" fill="#5a8ad0"/><rect x="5.5" y="6.5" width="9" height="7" fill="#fff" stroke="#3a70c0"/><rect x="7" y="10" width="6" height="2" fill="#8ac848"/></svg>
<div class="a" style="left:111px;top:94px;width:583px;height:295px;background:#c4d6dc;border:1px solid #5b6b72"></div>
<svg style="left:121.5px;top:102.5px" width="14" height="11" viewBox="0 0 14 11"><rect x="0.5" y="0.5" width="13" height="10" fill="#000" stroke="#8a8a8a"/><rect x="0.5" y="0.5" width="13" height="1.6" fill="#c8c8c8"/><text x="1.5" y="8.6" font-family="Liberation Sans" font-weight="bold" font-size="6" fill="#fff">C:\.</text></svg>
<span class="t" style="left:312.50px;top:102.00px;font-size:13.6px;color:#1e1e1e;font-family:'Liberation Sans',sans-serif;font-weight:400;transform:scaleX(0.9365);transform-origin:0 0;">C:\Windows\System32\cmd.exe</span>
<div class="a" style="left:600.5px;top:94px;width:86.0px;height:18.5px;background:#c4d6dc;border:1px solid #5b6b72"></div>
<div class="a" style="left:624.2px;top:94px;width:1px;height:18.5px;background:#5b6b72;"></div>
<div class="a" style="left:647.2px;top:94px;width:1px;height:18.5px;background:#5b6b72;"></div>
<div class="a" style="left:607.85px;top:104px;width:9px;height:2.8px;background:#000;"></div>
<div class="a" style="left:631.4000000000001px;top:100.2px;width:8.8px;height:6.6px;border:2px solid #000;border-top-width:2.3px"></div>
<svg style="left:662.65px;top:100px" width="8.4" height="7" viewBox="0 0 8.4 7"><path d="M1 0.6 L7.4 6.4 M7.4 0.6 L1 6.4" stroke="#000" stroke-width="2.3" stroke-linecap="butt"/></svg>
<div class="a" style="left:120px;top:122px;width:565px;height:258px;background:#000;overflow:hidden">
<span class="t" style="left:-0.40px;top:0.00px;font-size:11.42px;color:#d0d0d0;font-family:'Liberation Mono',sans-serif;font-weight:700;">No matching files were found.</span>
<span class="t" style="left:-0.40px;top:21.00px;font-size:11.42px;color:#d0d0d0;font-family:'Liberation Mono',sans-serif;font-weight:700;">No matching files were found.</span>
<span class="t" style="left:-0.40px;top:41.00px;font-size:11.42px;color:#d0d0d0;font-family:'Liberation Mono',sans-serif;font-weight:700;">No matching files were found.</span>
<span class="t" style="left:-0.40px;top:62.00px;font-size:11.42px;color:#d0d0d0;font-family:'Liberation Mono',sans-serif;font-weight:700;">No matching files were found.</span>
<span class="t" style="left:-0.40px;top:83.00px;font-size:11.42px;color:#d0d0d0;font-family:'Liberation Mono',sans-serif;font-weight:700;">No matching files were found.</span>
<span class="t" style="left:-0.40px;top:103.00px;font-size:11.42px;color:#d0d0d0;font-family:'Liberation Mono',sans-serif;font-weight:700;">No matching files were found.</span>
<span class="t" style="left:-0.40px;top:124.00px;font-size:11.42px;color:#d0d0d0;font-family:'Liberation Mono',sans-serif;font-weight:700;">No matching files were found.</span>
<span class="t" style="left:-0.40px;top:145.00px;font-size:11.42px;color:#d0d0d0;font-family:'Liberation Mono',sans-serif;font-weight:700;">No matching files were found.</span>
<span class="t" style="left:-0.40px;top:165.00px;font-size:11.42px;color:#d0d0d0;font-family:'Liberation Mono',sans-serif;font-weight:700;">No matching files were found.</span>
<span class="t" style="left:-0.40px;top:186.00px;font-size:11.42px;color:#d0d0d0;font-family:'Liberation Mono',sans-serif;font-weight:700;">No matching files were found.</span>
<span class="t" style="left:-0.40px;top:206.00px;font-size:11.42px;color:#d0d0d0;font-family:'Liberation Mono',sans-serif;font-weight:700;">No matching files were found.</span>
<span class="t" style="left:-0.40px;top:227.00px;font-size:11.42px;color:#d0d0d0;font-family:'Liberation Mono',sans-serif;font-weight:700;">No matching files were found.</span>
<span class="t" style="left:-0.40px;top:248.00px;font-size:11.42px;color:#d0d0d0;font-family:'Liberation Mono',sans-serif;font-weight:700;">Press any key to continue . . .</span>
</div>
<div class="a" style="left:671px;top:122px;width:14px;height:8px;background:#ffffff;"></div>
<div class="a" style="left:365px;top:128px;width:497.5px;height:434px;background:#64c8e8;border:1px solid #2f5f73;border-bottom:none"></div>
<div class="a" style="left:375.8px;top:135.6px;width:3.3px;height:12.9px;background:#8a1ee0;"></div>
<div class="a" style="left:379.1px;top:135.6px;width:3px;height:12.9px;background:#ff9000;"></div>
<div class="a" style="left:382.1px;top:135.6px;width:4.6px;height:12.9px;background:#0090ff;"></div>
<div class="a" style="left:386.7px;top:135.6px;width:2.2px;height:12.9px;background:#e8f040;"></div>
<span class="t" style="left:484.20px;top:137.00px;font-size:13.6px;color:#0a0a0a;font-family:'Liberation Sans',sans-serif;font-weight:400;transform:scaleX(0.9153);transform-origin:0 0;">RamMap - Sysinternals: www.sysinternals.com</span>
<div class="a" style="left:769.3px;top:128px;width:86.30000000000007px;height:18.400000000000006px;background:#64c8e8;border:1px solid #2a3a40"></div>
<div class="a" style="left:793.3px;top:128px;width:1px;height:18.400000000000006px;background:#2a3a40;"></div>
<div class="a" style="left:815.7px;top:128px;width:1px;height:18.400000000000006px;background:#2a3a40;"></div>
<div class="a" style="left:816.7px;top:128px;width:37.89999999999998px;height:17.400000000000006px;background:#c75a50;"></div>
<div class="a" style="left:776.8px;top:138px;width:9px;height:2.8px;background:#000;"></div>
<div class="a" style="left:800.2px;top:134.2px;width:8.8px;height:6.6px;border:2px solid #000;border-top-width:2.3px"></div>
<svg style="left:831.45px;top:134px" width="8.4" height="7" viewBox="0 0 8.4 7"><path d="M1 0.6 L7.4 6.4 M7.4 0.6 L1 6.4" stroke="#000" stroke-width="2.3" stroke-linecap="butt"/></svg>
<div class="a" style="left:373.7px;top:157px;width:480px;height:405px;background:#f0f0f0;"></div>
<span class="t" style="-webkit-text-stroke:0.15px #111;left:378.40px;top:159.00px;font-size:10.3px;color:#111;font-family:'Liberation Sans',sans-serif;font-weight:400;transform:scaleX(0.9220);transform-origin:0 0;">File</span>
<span class="t" style="-webkit-text-stroke:0.15px #111;left:405.60px;top:159.00px;font-size:10.3px;color:#111;font-family:'Liberation Sans',sans-serif;font-weight:400;">Empty</span>
<span class="t" style="-webkit-text-stroke:0.15px #111;left:447.10px;top:159.00px;font-size:10.3px;color:#111;font-family:'Liberation Sans',sans-serif;font-weight:400;transform:scaleX(0.9912);transform-origin:0 0;">Help</span>
<div class="a" style="left:373.7px;top:172.2px;width:480px;height:1.5px;background:#6a6a6a;"></div>
<div class="a" style="left:442px;top:184px;width:51px;height:17px;background:#f0f0f0;border:1px solid #9a9ca3;border-bottom:none"></div>
<span class="t" style="-webkit-text-stroke:0.15px #111;left:445.60px;top:188.00px;font-size:10.3px;color:#111;font-family:'Liberation Sans',sans-serif;font-weight:400;transform:scaleX(0.8486);transform-origin:0 0;">Processes</span>
<div class="a" style="left:492px;top:184px;width:81px;height:17px;background:#f0f0f0;border:1px solid #9a9ca3;border-bottom:none"></div>
<span class="t" style="-webkit-text-stroke:0.15px #111;left:497.20px;top:188.00px;font-size:10.3px;color:#111;font-family:'Liberation Sans',sans-serif;font-weight:400;transform:scaleX(0.8803);transform-origin:0 0;">Priority Summary</span>
<div class="a" style="left:572px;top:184px;width:72px;height:17px;background:#f0f0f0;border:1px solid #9a9ca3;border-bottom:none"></div>
<span class="t" style="-webkit-text-stroke:0.15px #111;left:577.10px;top:188.00px;font-size:10.3px;color:#111;font-family:'Liberation Sans',sans-serif;font-weight:400;transform:scaleX(0.8607);transform-origin:0 0;">Physical Pages</span>
<div class="a" style="left:643px;top:184px;width:77px;height:17px;background:#f0f0f0;border:1px solid #9a9ca3;border-bottom:none"></div>
<span class="t" style="-webkit-text-stroke:0.15px #111;left:647.60px;top:188.00px;font-size:10.3px;color:#111;font-family:'Liberation Sans',sans-serif;font-weight:400;transform:scaleX(0.8657);transform-origin:0 0;">Physical Ranges</span>
<div class="a" style="left:719px;top:184px;width:66px;height:17px;background:#f0f0f0;border:1px solid #9a9ca3;border-bottom:none"></div>
<span class="t" style="-webkit-text-stroke:0.15px #111;left:724.60px;top:188.00px;font-size:10.3px;color:#111;font-family:'Liberation Sans',sans-serif;font-weight:400;transform:scaleX(0.8565);transform-origin:0 0;">File Summary</span>
<div class="a" style="left:784px;top:184px;width:55px;height:17px;background:#f0f0f0;border:1px solid #9a9ca3;border-bottom:none"></div>
<span class="t" style="-webkit-text-stroke:0.15px #111;left:789.20px;top:188.00px;font-size:10.3px;color:#111;font-family:'Liberation Sans',sans-serif;font-weight:400;transform:scaleX(0.8599);transform-origin:0 0;">File Details</span>
<div class="a" style="left:381px;top:200.4px;width:466px;height:362px;background:#ffffff;border:1px solid #9a9ca3;border-bottom:none"></div>
<div class="a" style="left:385px;top:201.5px;width:459px;height:360px;background:#f0f0f0;"></div>
<div class="a" style="left:381px;top:182.3px;width:62px;height:20px;background:#ffffff;border:1px solid #9a9ca3;border-bottom:none"></div>
<span class="t" style="-webkit-text-stroke:0.15px #111;left:387.80px;top:186.00px;font-size:10.3px;color:#111;font-family:'Liberation Sans',sans-serif;font-weight:400;transform:scaleX(0.8808);transform-origin:0 0;">Use Counts</span>
<div class="a" style="left:438.6px;top:211.2px;width:394.5px;height:34.4px;background:#bdbb5f;border-top:1px solid #6e6e6e;border-left:1px solid #6e6e6e;border-bottom:1px solid #fff;border-right:1px solid #fff"></div>
<div class="a" style="left:821.7px;top:212.2px;width:5.7px;height:32.5px;background:#7f9fc0;"></div>
<div class="a" style="left:827.4px;top:212.2px;width:5.1px;height:32.5px;background:#00c000;"></div>
<div class="a" style="left:394.7px;top:256px;width:32px;height:294px;background:#804000;border-top:1px solid #6e6e6e;border-left:1px solid #6e6e6e;border-right:1px solid #fff;border-bottom:1px solid #fff"></div>
<div class="a" style="left:395.7px;top:257px;width:30.3px;height:18.5px;background:#ffff80;"></div>
<div class="a" style="left:395.7px;top:275.5px;width:30.3px;height:5.3px;background:#b0d0ff;"></div>
<div class="a" style="left:395.7px;top:280.8px;width:30.3px;height:8.6px;background:#d8e8ff;"></div>
<div class="a" style="left:395.7px;top:289.4px;width:30.3px;height:5.9px;background:#808000;"></div>
<div class="a" style="left:395.7px;top:540px;width:30.3px;height:3.5px;background:#800000;"></div>
<div class="a" style="left:395.7px;top:543.5px;width:30.3px;height:2.3px;background:#8080ff;"></div>
<div class="a" style="left:395.7px;top:546px;width:30.3px;height:2.8px;background:#ffc080;"></div>
<div class="a" style="left:438.4px;top:256.2px;width:396.5px;height:294.5px;background:#ffffff;border:1px solid #828790"></div>
<div class="a" style="left:439.4px;top:271px;width:394.5px;height:1px;background:#e5e5e5;"></div>
<div class="a" style="left:525.5px;top:257.2px;width:1px;height:14px;background:#e5e5e5;"></div>
<div class="a" style="left:612px;top:257.2px;width:1px;height:14px;background:#e5e5e5;"></div>
<div class="a" style="left:698.5px;top:257.2px;width:1px;height:14px;background:#e5e5e5;"></div>
<div class="a" style="left:784.5px;top:257.2px;width:1px;height:14px;background:#e5e5e5;"></div>
<span class="t" style="-webkit-text-stroke:0.15px #111;left:444.60px;top:260.00px;font-size:10.3px;color:#111;font-family:'Liberation Sans',sans-serif;font-weight:400;transform:scaleX(0.8601);transform-origin:0 0;">Usage</span>
<span class="t" style="-webkit-text-stroke:0.15px #111;left:585.80px;top:260.00px;font-size:10.3px;color:#111;font-family:'Liberation Sans',sans-serif;font-weight:400;transform:scaleX(0.9655);transform-origin:0 0;">Total</span>
<span class="t" style="-webkit-text-stroke:0.15px #111;left:642.90px;top:260.00px;font-size:10.3px;color:#111;font-family:'Liberation Sans',sans-serif;font-weight:400;transform:scaleX(0.9092);transform-origin:0 0;">Active</span>
<div class="a" style="left:679.5px;top:258.2px;width:13.2px;height:12.9px;background:#bdbb5f;"></div>
<span class="t" style="-webkit-text-stroke:0.15px #111;left:720.50px;top:260.00px;font-size:10.3px;color:#111;font-family:'Liberation Sans',sans-serif;font-weight:400;transform:scaleX(0.9075);transform-origin:0 0;">Standby</span>
<div class="a" style="left:765.7px;top:258.2px;width:13.8px;height:12.9px;background:#7f9fc0;"></div>
<div class="a" style="left:439.4px;top:257.2px;width:394.5px;height:277px;overflow:hidden">
<span class="t" style="-webkit-text-stroke:0.15px #111;left:367.30px;top:3.00px;font-size:10.3px;color:#111;font-family:'Liberation Sans',sans-serif;font-weight:400;transform:scaleX(0.7965);transform-origin:0 0;">Modified</span>
<div class="a" style="left:3.8000000000000114px;top:14.699999999999989px;width:14px;height:14px;background:#ffff80;"></div>
<span class="t" style="-webkit-text-stroke:0.15px #111;left:19.20px;top:18.00px;font-size:10.3px;color:#111;font-family:'Liberation Sans',sans-serif;font-weight:400;transform:scaleX(0.9000);transform-origin:0 0;">Process Private</span>
<span class="t" style="-webkit-text-stroke:0.15px #111;left:126.05px;top:18.00px;font-size:10.3px;color:#111;font-family:'Liberation Sans',sans-serif;font-weight:400;transform:scaleX(0.8850);transform-origin:0 0;">131 324 K</span>
<span class="t" style="-webkit-text-stroke:0.15px #111;left:213.02px;top:18.00px;font-size:10.3px;color:#111;font-family:'Liberation Sans',sans-serif;font-weight:400;transform:scaleX(0.8850);transform-origin:0 0;">115 548 K</span>
<span class="t" style="-webkit-text-stroke:0.15px #111;left:303.81px;top:18.00px;font-size:10.3px;color:#111;font-family:'Liberation Sans',sans-serif;font-weight:400;transform:scaleX(0.8850);transform-origin:0 0;">15 540 K</span>
<div class="a" style="left:3.8000000000000114px;top:29.339999999999975px;width:14px;height:14px;background:#b0d0ff;"></div>
<span class="t" style="-webkit-text-stroke:0.15px #111;left:19.20px;top:33.00px;font-size:10.3px;color:#111;font-family:'Liberation Sans',sans-serif;font-weight:400;transform:scaleX(0.9000);transform-origin:0 0;">Mapped File</span>
<span class="t" style="-webkit-text-stroke:0.15px #111;left:131.11px;top:33.00px;font-size:10.3px;color:#111;font-family:'Liberation Sans',sans-serif;font-weight:400;transform:scaleX(0.8850);transform-origin:0 0;">45 160 K</span>
<span class="t" style="-webkit-text-stroke:0.15px #111;left:217.41px;top:33.00px;font-size:10.3px;color:#111;font-family:'Liberation Sans',sans-serif;font-weight:400;transform:scaleX(0.8850);transform-origin:0 0;">36 908 K</span>
<span class="t" style="-webkit-text-stroke:0.15px #111;left:308.88px;top:33.00px;font-size:10.3px;color:#111;font-family:'Liberation Sans',sans-serif;font-weight:400;transform:scaleX(0.8850);transform-origin:0 0;">8 236 K</span>
<div class="a" style="left:3.8000000000000114px;top:43.98000000000002px;width:14px;height:14px;background:#d8e8ff;"></div>
<span class="t" style="-webkit-text-stroke:0.15px #111;left:19.20px;top:47.00px;font-size:10.3px;color:#111;font-family:'Liberation Sans',sans-serif;font-weight:400;transform:scaleX(0.9000);transform-origin:0 0;">Shareable</span>
<span class="t" style="-webkit-text-stroke:0.15px #111;left:131.11px;top:47.00px;font-size:10.3px;color:#111;font-family:'Liberation Sans',sans-serif;font-weight:400;transform:scaleX(0.8850);transform-origin:0 0;">47 560 K</span>
<span class="t" style="-webkit-text-stroke:0.15px #111;left:217.41px;top:47.00px;font-size:10.3px;color:#111;font-family:'Liberation Sans',sans-serif;font-weight:400;transform:scaleX(0.8850);transform-origin:0 0;">21 888 K</span>
<span class="t" style="-webkit-text-stroke:0.15px #111;left:316.47px;top:47.00px;font-size:10.3px;color:#111;font-family:'Liberation Sans',sans-serif;font-weight:400;transform:scaleX(0.8850);transform-origin:0 0;">428 K</span>
<span class="t" style="-webkit-text-stroke:0.15px #111;left:391.60px;top:47.00px;font-size:10.3px;color:#111;font-family:'Liberation Sans',sans-serif;font-weight:400;">2</span>
<div class="a" style="left:3.8000000000000114px;top:58.620000000000005px;width:14px;height:14px;background:#d0d0d0;"></div>
<span class="t" style="-webkit-text-stroke:0.15px #111;left:19.20px;top:62.00px;font-size:10.3px;color:#111;font-family:'Liberation Sans',sans-serif;font-weight:400;transform:scaleX(0.9000);transform-origin:0 0;">Page Table</span>
<span class="t" style="-webkit-text-stroke:0.15px #111;left:131.11px;top:62.00px;font-size:10.3px;color:#111;font-family:'Liberation Sans',sans-serif;font-weight:400;transform:scaleX(0.8850);transform-origin:0 0;">16 260 K</span>
<span class="t" style="-webkit-text-stroke:0.15px #111;left:217.41px;top:62.00px;font-size:10.3px;color:#111;font-family:'Liberation Sans',sans-serif;font-weight:400;transform:scaleX(0.8850);transform-origin:0 0;">15 924 K</span>
<span class="t" style="-webkit-text-stroke:0.15px #111;left:316.47px;top:62.00px;font-size:10.3px;color:#111;font-family:'Liberation Sans',sans-serif;font-weight:400;transform:scaleX(0.8850);transform-origin:0 0;">336 K</span>
<div class="a" style="left:3.8000000000000114px;top:73.25999999999999px;width:14px;height:14px;background:#808000;"></div>
<span class="t" style="-webkit-text-stroke:0.15px #111;left:19.20px;top:77.00px;font-size:10.3px;color:#111;font-family:'Liberation Sans',sans-serif;font-weight:400;transform:scaleX(0.9000);transform-origin:0 0;">Paged Pool</span>
<span class="t" style="-webkit-text-stroke:0.15px #111;left:131.11px;top:77.00px;font-size:10.3px;color:#111;font-family:'Liberation Sans',sans-serif;font-weight:400;transform:scaleX(0.8850);transform-origin:0 0;">34 632 K</span>
<span class="t" style="-webkit-text-stroke:0.15px #111;left:217.41px;top:77.00px;font-size:10.3px;color:#111;font-family:'Liberation Sans',sans-serif;font-weight:400;transform:scaleX(0.8850);transform-origin:0 0;">28 308 K</span>
<span class="t" style="-webkit-text-stroke:0.15px #111;left:308.88px;top:77.00px;font-size:10.3px;color:#111;font-family:'Liberation Sans',sans-serif;font-weight:400;transform:scaleX(0.8850);transform-origin:0 0;">6 324 K</span>
<div class="a" style="left:3.8000000000000114px;top:87.89999999999998px;width:14px;height:14px;background:#804000;"></div>
<span class="t" style="-webkit-text-stroke:0.15px #111;left:19.20px;top:91.00px;font-size:10.3px;color:#111;font-family:'Liberation Sans',sans-serif;font-weight:400;transform:scaleX(0.9000);transform-origin:0 0;">Nonpaged Pool</span>
<span class="t" style="-webkit-text-stroke:0.15px #111;left:118.44px;top:91.00px;font-size:10.3px;color:#111;font-family:'Liberation Sans',sans-serif;font-weight:400;transform:scaleX(0.8850);transform-origin:0 0;">1 764 168 K</span>
<span class="t" style="-webkit-text-stroke:0.15px #111;left:204.74px;top:91.00px;font-size:10.3px;color:#111;font-family:'Liberation Sans',sans-serif;font-weight:400;transform:scaleX(0.8850);transform-origin:0 0;">1 764 152 K</span>
<div class="a" style="left:3.8000000000000114px;top:102.53999999999996px;width:14px;height:14px;background:#800000;"></div>
<span class="t" style="-webkit-text-stroke:0.15px #111;left:19.20px;top:106.00px;font-size:10.3px;color:#111;font-family:'Liberation Sans',sans-serif;font-weight:400;transform:scaleX(0.9000);transform-origin:0 0;">System PTE</span>
<span class="t" style="-webkit-text-stroke:0.15px #111;left:131.11px;top:106.00px;font-size:10.3px;color:#111;font-family:'Liberation Sans',sans-serif;font-weight:400;transform:scaleX(0.8850);transform-origin:0 0;">25 348 K</span>
<span class="t" style="-webkit-text-stroke:0.15px #111;left:217.41px;top:106.00px;font-size:10.3px;color:#111;font-family:'Liberation Sans',sans-serif;font-weight:400;transform:scaleX(0.8850);transform-origin:0 0;">25 036 K</span>
<span class="t" style="-webkit-text-stroke:0.15px #111;left:316.47px;top:106.00px;font-size:10.3px;color:#111;font-family:'Liberation Sans',sans-serif;font-weight:400;transform:scaleX(0.8850);transform-origin:0 0;">312 K</span>
<div class="a" style="left:3.8000000000000114px;top:117.18px;width:14px;height:14px;background:#8080ff;"></div>
<span class="t" style="-webkit-text-stroke:0.15px #111;left:19.20px;top:120.00px;font-size:10.3px;color:#111;font-family:'Liberation Sans',sans-serif;font-weight:400;transform:scaleX(0.9000);transform-origin:0 0;">Session Private</span>
<span class="t" style="-webkit-text-stroke:0.15px #111;left:131.79px;top:120.00px;font-size:10.3px;color:#111;font-family:'Liberation Sans',sans-serif;font-weight:400;transform:scaleX(0.8850);transform-origin:0 0;">11 348 K</span>
<span class="t" style="-webkit-text-stroke:0.15px #111;left:217.41px;top:120.00px;font-size:10.3px;color:#111;font-family:'Liberation Sans',sans-serif;font-weight:400;transform:scaleX(0.8850);transform-origin:0 0;">10 464 K</span>
<span class="t" style="-webkit-text-stroke:0.15px #111;left:316.47px;top:120.00px;font-size:10.3px;color:#111;font-family:'Liberation Sans',sans-serif;font-weight:400;transform:scaleX(0.8850);transform-origin:0 0;">884 K</span>
<div class="a" style="left:3.8000000000000114px;top:131.82px;width:14px;height:14px;background:#ff80c0;"></div>
<span class="t" style="-webkit-text-stroke:0.15px #111;left:19.20px;top:135.00px;font-size:10.3px;color:#111;font-family:'Liberation Sans',sans-serif;font-weight:400;transform:scaleX(0.9000);transform-origin:0 0;">Metafile</span>
<span class="t" style="-webkit-text-stroke:0.15px #111;left:136.18px;top:135.00px;font-size:10.3px;color:#111;font-family:'Liberation Sans',sans-serif;font-weight:400;transform:scaleX(0.8850);transform-origin:0 0;">1 952 K</span>
<span class="t" style="-webkit-text-stroke:0.15px #111;left:222.48px;top:135.00px;font-size:10.3px;color:#111;font-family:'Liberation Sans',sans-serif;font-weight:400;transform:scaleX(0.8850);transform-origin:0 0;">1 528 K</span>
<span class="t" style="-webkit-text-stroke:0.15px #111;left:316.47px;top:135.00px;font-size:10.3px;color:#111;font-family:'Liberation Sans',sans-serif;font-weight:400;transform:scaleX(0.8850);transform-origin:0 0;">256 K</span>
<div class="a" style="left:3.8000000000000114px;top:146.45999999999998px;width:14px;height:14px;background:#000000;"></div>
<span class="t" style="-webkit-text-stroke:0.15px #111;left:19.20px;top:150.00px;font-size:10.3px;color:#111;font-family:'Liberation Sans',sans-serif;font-weight:400;transform:scaleX(0.9000);transform-origin:0 0;">AWE</span>
<div class="a" style="left:3.8000000000000114px;top:161.10000000000002px;width:14px;height:14px;background:#808080;"></div>
<span class="t" style="-webkit-text-stroke:0.15px #111;left:19.20px;top:164.00px;font-size:10.3px;color:#111;font-family:'Liberation Sans',sans-serif;font-weight:400;transform:scaleX(0.9000);transform-origin:0 0;">Driver Locked</span>
<span class="t" style="-webkit-text-stroke:0.15px #111;left:136.18px;top:164.00px;font-size:10.3px;color:#111;font-family:'Liberation Sans',sans-serif;font-weight:400;transform:scaleX(0.8850);transform-origin:0 0;">1 180 K</span>
<span class="t" style="-webkit-text-stroke:0.15px #111;left:222.48px;top:164.00px;font-size:10.3px;color:#111;font-family:'Liberation Sans',sans-serif;font-weight:400;transform:scaleX(0.8850);transform-origin:0 0;">1 180 K</span>
<div class="a" style="left:3.8000000000000114px;top:175.74px;width:14px;height:14px;background:#ffc080;"></div>
<span class="t" style="-webkit-text-stroke:0.15px #111;left:19.20px;top:179.00px;font-size:10.3px;color:#111;font-family:'Liberation Sans',sans-serif;font-weight:400;transform:scaleX(0.9000);transform-origin:0 0;">Kernel Stack</span>
<span class="t" style="-webkit-text-stroke:0.15px #111;left:131.11px;top:179.00px;font-size:10.3px;color:#111;font-family:'Liberation Sans',sans-serif;font-weight:400;transform:scaleX(0.8850);transform-origin:0 0;">12 764 K</span>
<span class="t" style="-webkit-text-stroke:0.15px #111;left:217.41px;top:179.00px;font-size:10.3px;color:#111;font-family:'Liberation Sans',sans-serif;font-weight:400;transform:scaleX(0.8850);transform-origin:0 0;">12 744 K</span>
<span class="t" style="-webkit-text-stroke:0.15px #111;left:321.55px;top:179.00px;font-size:10.3px;color:#111;font-family:'Liberation Sans',sans-serif;font-weight:400;transform:scaleX(0.8850);transform-origin:0 0;">20 K</span>
<div class="a" style="left:3.8000000000000114px;top:190.38px;width:14px;height:14px;background:#c0c0c0;"></div>
<span class="t" style="-webkit-text-stroke:0.15px #111;left:19.20px;top:194.00px;font-size:10.3px;color:#111;font-family:'Liberation Sans',sans-serif;font-weight:400;transform:scaleX(0.9000);transform-origin:0 0;">Unused</span>
<span class="t" style="-webkit-text-stroke:0.15px #111;left:136.18px;top:194.00px;font-size:10.3px;color:#111;font-family:'Liberation Sans',sans-serif;font-weight:400;transform:scaleX(0.8850);transform-origin:0 0;">5 036 K</span>
<span class="t" style="-webkit-text-stroke:0.15px #111;left:222.48px;top:194.00px;font-size:10.3px;color:#111;font-family:'Liberation Sans',sans-serif;font-weight:400;transform:scaleX(0.8850);transform-origin:0 0;">4 996 K</span>
<div class="a" style="left:3.8000000000000114px;top:205.01999999999998px;width:14px;height:14px;background:#40ff80;"></div>
<span class="t" style="-webkit-text-stroke:0.15px #111;left:19.20px;top:208.00px;font-size:10.3px;color:#111;font-family:'Liberation Sans',sans-serif;font-weight:400;transform:scaleX(0.9000);transform-origin:0 0;">Large Page</span>
<span class="t" style="-webkit-text-stroke:0.15px #111;left:19.20px;top:223.00px;font-size:10.3px;color:#111;font-family:'Liberation Sans',sans-serif;font-weight:400;transform:scaleX(0.9000);transform-origin:0 0;">Total</span>
<span class="t" style="-webkit-text-stroke:0.15px #111;left:118.44px;top:223.00px;font-size:10.3px;color:#111;font-family:'Liberation Sans',sans-serif;font-weight:400;transform:scaleX(0.8850);transform-origin:0 0;">2 096 732 K</span>
<span class="t" style="-webkit-text-stroke:0.15px #111;left:204.74px;top:223.00px;font-size:10.3px;color:#111;font-family:'Liberation Sans',sans-serif;font-weight:400;transform:scaleX(0.8850);transform-origin:0 0;">2 038 676 K</span>
<span class="t" style="-webkit-text-stroke:0.15px #111;left:303.81px;top:223.00px;font-size:10.3px;color:#111;font-family:'Liberation Sans',sans-serif;font-weight:400;transform:scaleX(0.8850);transform-origin:0 0;">32 336 K</span>
<span class="t" style="-webkit-text-stroke:0.15px #111;left:391.60px;top:223.00px;font-size:10.3px;color:#111;font-family:'Liberation Sans',sans-serif;font-weight:400;">2</span>
</div>
<div class="a" style="left:439.4px;top:534.7px;width:394.5px;height:14px;background:#ffffff;border-top:1px solid #d9d9d9;border-bottom:1px solid #d9d9d9"></div>
<div class="a" style="left:440.4px;top:534.7px;width:14.5px;height:14px;background:#ffffff;border:1px solid #d9d9d9"></div>
<div class="a" style="left:818.7px;top:534.7px;width:13.8px;height:14px;background:#ffffff;border:1px solid #d9d9d9"></div>
<div class="a" style="left:454.5px;top:535.2px;width:165px;height:13px;background:#dadada;border:1px solid #bdbdbd"></div>
<div class="a" style="left:385px;top:560.5px;width:459px;height:1px;background:#ffffff;"></div>
<svg style="left:444px;top:538px" width="6" height="8"><path d="M5 0.5 L1.2 4 L5 7.5" stroke="#444" stroke-width="1.3" fill="none"/></svg>
<svg style="left:823px;top:538px" width="6" height="8"><path d="M1 0.5 L4.8 4 L1 7.5" stroke="#444" stroke-width="1.3" fill="none"/></svg>
<div class="a" style="left:534.2px;top:537.5px;width:1.3px;height:7px;background:#555;"></div>
<div class="a" style="left:537.2px;top:537.5px;width:1.3px;height:7px;background:#555;"></div>
<div class="a" style="left:540.2px;top:537.5px;width:1.3px;height:7px;background:#555;"></div>
<div class="a" style="left:869px;top:406px;width:1.5px;height:6px;background:#c05020;"></div>
<svg style="left:859px;top:520px" width="18" height="42" viewBox="0 0 18 42"><path d="M4 0 H18 V42 L3 33.5 C1 32.5 0.5 31.5 0.5 30 V4 C0.5 2 2 0 4 0Z" fill="#fdfdfd"/><path d="M5.5 4.5 L18 4 V22.5 L5.5 23 Z" fill="#0e78e0"/><circle cx="11.7" cy="13.3" r="5.2" fill="#f4f8fc"/><path d="M7.6 13.3 L10 11 V12.3 H13.4 V11 L15.8 13.3 L13.4 15.6 V14.3 H10 V15.6Z" fill="#0e78e0"/></svg>
<span class="t" style="left:657.60px;top:527.00px;font-size:17.4px;color:rgba(160,160,160,0.85);font-family:'Liberation Sans',sans-serif;font-weight:400;transform:scaleX(0.9785);transform-origin:0 0;">Activate Windows</span>
<span class="t" style="left:657.60px;top:549.00px;font-size:13px;color:rgba(160,160,160,0.85);font-family:'Liberation Sans',sans-serif;font-weight:400;transform:scaleX(0.9741);transform-origin:0 0;">Go to System in Control Panel to</span>
</body></html>
